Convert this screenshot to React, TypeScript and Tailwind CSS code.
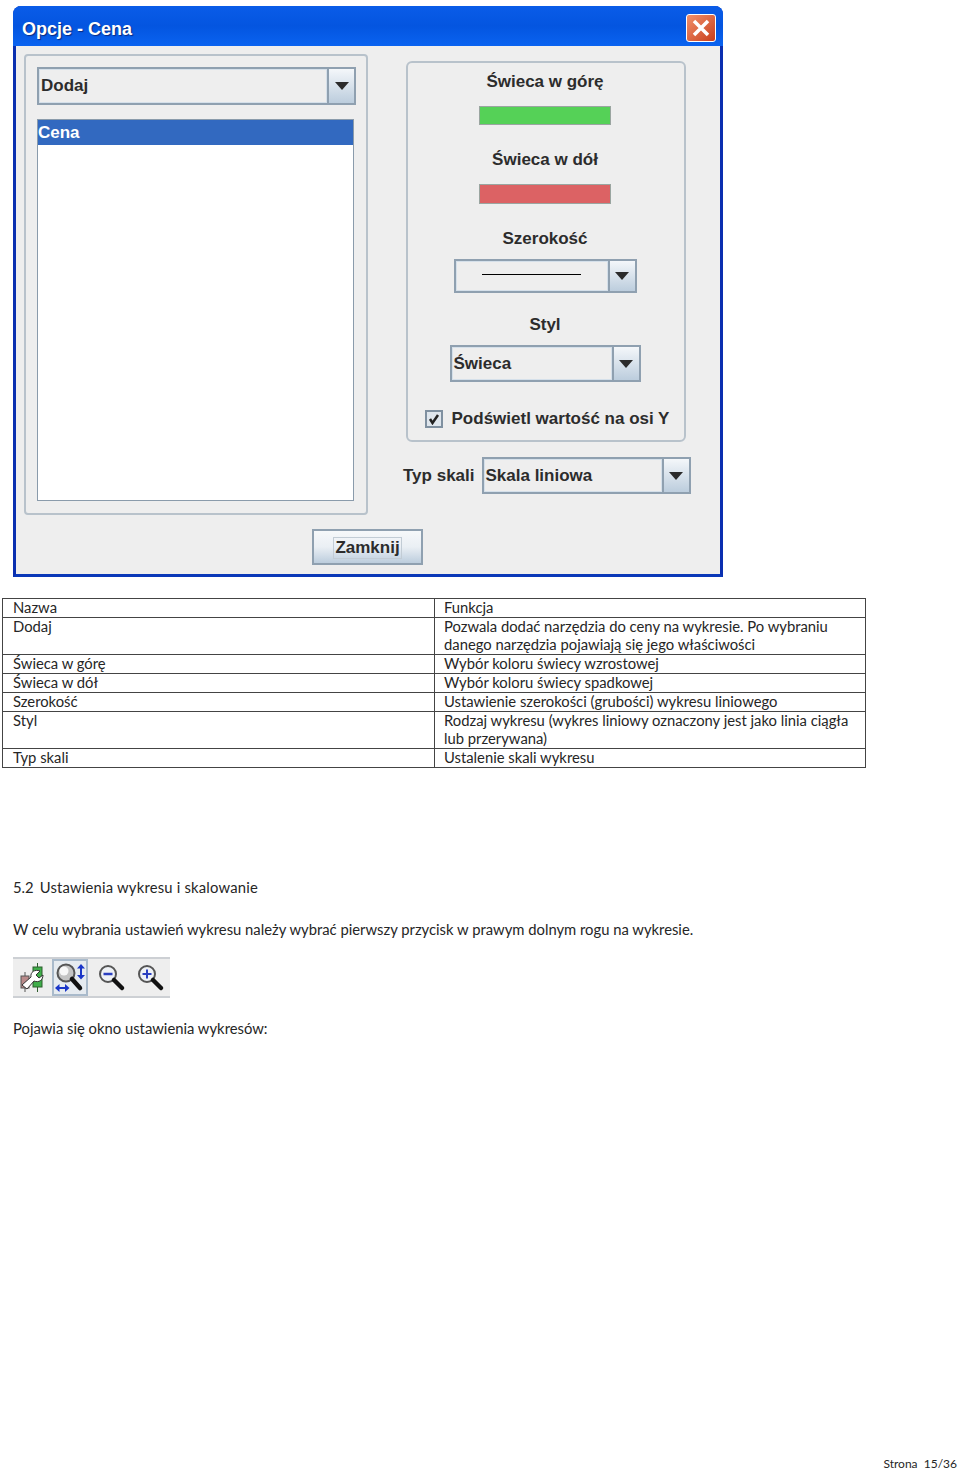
import React from 'react';

const Arrow = () => (
  <svg width="14" height="8" viewBox="0 0 14 8">
    <path d="M0 0H14L7 8Z" fill="#2b2b2b" />
  </svg>
);

const Combo = ({ width, height, btn, text, children }: { width: string; height: string; btn: string; text?: string; children?: React.ReactNode }) => (
  <div className={`flex border-2 border-[#8fa0b0] bg-[#eeeeee] ${width} ${height}`}>
    <div className="flex-1 min-w-0 flex items-center pl-[1px] border border-[#d5e0ea] text-[17px] font-bold text-[#2c2c2c] whitespace-nowrap">
      {text}
      {children}
    </div>
    <div className={`${btn} shrink-0 flex items-center justify-center border-l-2 border-[#8fa0b0] bg-gradient-to-b from-[#f4f7fa] to-[#bccddd]`}>
      <Arrow />
    </div>
  </div>
);

const rows: [React.ReactNode, React.ReactNode][] = [
  ['Nazwa', 'Funkcja'],
  ['Dodaj', <>Pozwala dodać narzędzia do ceny na wykresie. Po wybraniu<br />danego narzędzia pojawiają się jego właściwości</>],
  ['Świeca w górę', 'Wybór koloru świecy wzrostowej'],
  ['Świeca w dół', 'Wybór koloru świecy spadkowej'],
  ['Szerokość', 'Ustawienie szerokości (grubości) wykresu liniowego'],
  ['Styl', <>Rodzaj wykresu (wykres liniowy oznaczony jest jako linia ciągła<br />lub przerywana)</>],
  ['Typ skali', 'Ustalenie skali wykresu'],
];

const Toolbar = () => (
  <div className="ml-[13px] mt-[19px] w-[157px] h-[41px] bg-[#eeeeee] border-y-2 border-[#cdd0d4] flex items-center">
    <svg width="26" height="30" viewBox="0 0 26 30" className="ml-[6px]">
      <rect x="2" y="13" width="8" height="12" fill="#b98a8a" stroke="#555" />
      <path d="M6 9V13M6 25V29" stroke="#555" />
      <rect x="14" y="4" width="9" height="20" fill="#3fae4a" stroke="#2d5d2d" />
      <path d="M18.500 0V4M18.500 24V29" stroke="#2d5d2d" />
      <path d="M3 22L12 14C11 9 16 6 21 8L17 12L20 15L24 12C24 17 20 20 15 18L8 26Z" fill="#fff" stroke="#333" />
    </svg>
    <div className="ml-[7px] w-[36px] h-[37px] border-2 border-[#a9bacb] flex items-center justify-center bg-[#e6ebf0]">
      <svg width="32" height="32" viewBox="0 0 32 32">
        <circle cx="12" cy="11" r="8.500" fill="#c4c4c4" stroke="#555" strokeWidth="2" />
        <circle cx="10" cy="9" r="4.500" fill="#f8f8f8" />
        <path d="M18 17L26 26" stroke="#111" strokeWidth="4.500" strokeLinecap="round" />
        <path d="M27 2L23 6.500H26V13H23L27 17.500L31 13H28V6.500H31Z" fill="#1a36c8" />
        <path d="M1 26L5.500 22V25H11V22L15.500 26L11 30V27H5.500V30Z" fill="#1a36c8" />
      </svg>
    </div>
    <svg width="28" height="28" viewBox="0 0 28 28" className="ml-[10px]">
      <circle cx="10" cy="10" r="8" fill="#eef1f5" stroke="#555" strokeWidth="2" />
      <path d="M5.500 10H14.500" stroke="#2a3fc0" strokeWidth="2.500" />
      <path d="M16 16L24 24" stroke="#111" strokeWidth="4.500" strokeLinecap="round" />
    </svg>
    <svg width="28" height="28" viewBox="0 0 28 28" className="ml-[11px]">
      <circle cx="10" cy="10" r="8" fill="#eef1f5" stroke="#555" strokeWidth="2" />
      <path d="M5.500 10H14.500M10 5.500V14.500" stroke="#2a3fc0" strokeWidth="2" />
      <path d="M16 16L24 24" stroke="#111" strokeWidth="4.500" strokeLinecap="round" />
    </svg>
  </div>
);

export default function App() {
  return (
    <div className="w-[960px] h-[1471px] bg-white flex flex-col text-[#262626] font-['Lato',sans-serif] text-[14.800px] leading-[18px] overflow-hidden">
      {/* Dialog window */}
      <div className="ml-[13px] mt-[6px] w-[710px] h-[571px] shrink-0 flex flex-col rounded-t-[8px] bg-[#0a3fd0] border-x-[3px] border-b-[3px] border-x-[#0a2fb0] border-b-[#0a38b8] font-['Liberation_Sans',sans-serif]">
        <div className="h-[40px] shrink-0 -mx-[3px] flex items-center justify-between pt-[4px] pl-[9px] pr-[7px] rounded-t-[8px] bg-gradient-to-b from-[#0a5ce8] via-[#0455e0] to-[#0a63f0]">
          <span className="pt-[1px] text-[18px] font-bold text-white [text-shadow:1px_1px_1px_#0a2a80]">Opcje - Cena</span>
          <div className="w-[30px] h-[28px] rounded-[3px] border border-white bg-gradient-to-br from-[#f0906a] to-[#c83c18] flex items-center justify-center">
            <svg width="18" height="18" viewBox="0 0 18 18">
              <path d="M2 2L16 16M16 2L2 16" stroke="#fff" strokeWidth="3.500" />
            </svg>
          </div>
        </div>
        <div className="flex-1 min-h-0 bg-[#eeeeee] flex flex-col">
          <div className="flex items-start">
            {/* Left panel */}
            <div className="ml-[8px] mt-[8px] w-[344px] h-[461px] rounded-[4px] border-2 border-[#b8c2cb] pl-[11px] pt-[11px] shrink-0">
              <Combo width="w-[319px]" height="h-[38px]" btn="w-[27px]" text="Dodaj" />
              <div className="mt-[14px] w-[317px] h-[382px] bg-white border border-[#8a9bab]">
                <div className="h-[25px] bg-[#3269c0] flex items-center text-[17px] font-bold text-white">Cena</div>
              </div>
            </div>
            {/* Right column */}
            <div className="ml-[35px] mt-[15px] flex flex-col items-start">
              <div className="ml-[3px] w-[280px] h-[381px] pr-[2px] rounded-[6px] border-2 border-[#b8c2cb] flex flex-col items-center text-[17px] font-bold text-[#2c2c2c]">
                <span className="mt-[7px] leading-[24px]">Świeca w górę</span>
                <div className="mt-[12px] w-[132px] h-[19px] bg-[#55d157] border border-[#9aa5a0]" />
                <span className="mt-[23px] leading-[24px]">Świeca w dół</span>
                <div className="mt-[12px] w-[132px] h-[20px] bg-[#dc6264] border border-[#9aa5a0]" />
                <span className="mt-[23px] leading-[24px]">Szerokość</span>
                <div className="mt-[8px]">
                  <Combo width="w-[183px]" height="h-[34px]" btn="w-[27px]">
                    <div className="ml-[24px] mb-[3px] w-[99px] h-[1px] bg-black" />
                  </Combo>
                </div>
                <span className="mt-[20px] leading-[24px]">Styl</span>
                <div className="mt-[8px]">
                  <Combo width="w-[191px]" height="h-[37px]" btn="w-[27px]" text="Świeca" />
                </div>
                <div className="mt-[27px] flex items-center ml-[4px]">
                  <div className="w-[18px] h-[18px] border-2 border-[#7f90a0] bg-[#dfe6ed] flex items-center justify-center">
                    <svg width="12" height="12" viewBox="0 0 12 12">
                      <path d="M2 6L4.500 10L10 2" fill="none" stroke="#222" strokeWidth="2.500" />
                    </svg>
                  </div>
                  <span className="ml-[9px] leading-[20px] whitespace-nowrap">Podświetl wartość na osi Y</span>
                </div>
              </div>
              <div className="mt-[15px] flex items-center text-[17px] font-bold text-[#2c2c2c]">
                <span className="whitespace-nowrap">Typ skali</span>
                <div className="ml-[7px]">
                  <Combo width="w-[209px]" height="h-[37px]" btn="w-[27px]" text="Skala liniowa" />
                </div>
              </div>
            </div>
          </div>
          <div className="mt-[14px] ml-[296px] w-[111px] h-[36px] pt-[2px] border-2 border-[#8fa0b0] bg-gradient-to-b from-[#f6f8fa] via-[#eaeff4] to-[#bccddd] flex items-center justify-center">
            <span className="border border-[#c2ccd5] px-[1px] text-[17px] leading-[20px] font-bold text-[#2c2c2c]">Zamknij</span>
          </div>
        </div>
      </div>

      {/* Function table */}
      <table className="ml-[2px] mt-[21px] w-[864px] table-fixed border-collapse border border-[#444] shrink-0">
        <colgroup>
          <col className="w-[432px]" />
          <col />
        </colgroup>
        <tbody>
          {rows.map(([name, fn], i) => (
            <tr key={i}>
              <td className="border border-[#444] pl-[10px] align-top">
                <div className="-mt-[1px] pb-[1px]">{name}</div>
              </td>
              <td className="border border-[#444] pl-[9px] align-top whitespace-nowrap">
                <div className="-mt-[1px] pb-[1px]">{fn}</div>
              </td>
            </tr>
          ))}
        </tbody>
      </table>

      <p className="ml-[13px] mt-[110px] flex">
        <span>5.2</span>
        <span className="ml-[6px] tracking-[0.2px]">Ustawienia wykresu i skalowanie</span>
      </p>
      <p className="ml-[13px] mt-[24px]">W celu wybrania ustawień wykresu należy wybrać pierwszy przycisk w prawym dolnym rogu na wykresie.</p>
      <Toolbar />
      <p className="ml-[13px] mt-[21px]">Pojawia się okno ustawienia wykresów:</p>
      <p className="mt-auto mr-[3px] mb-[-2px] text-right text-[12px]">Strona &nbsp;15/36</p>
    </div>
  );
}
